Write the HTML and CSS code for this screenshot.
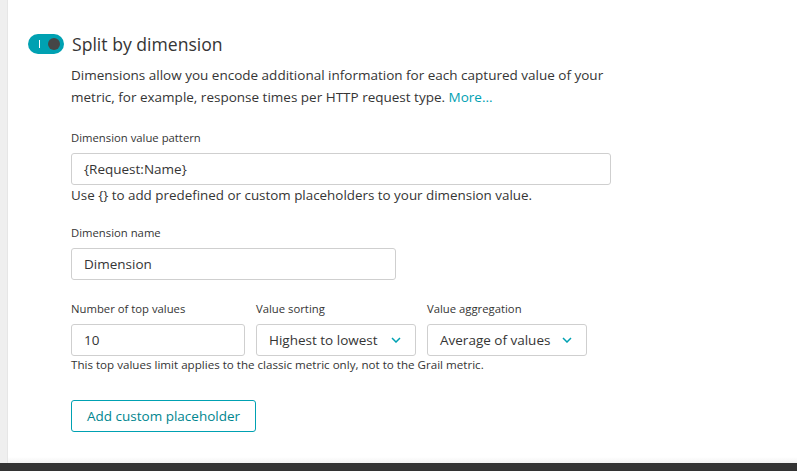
FILE: index.html
```html
<!DOCTYPE html>
<html lang="en">
<head>
    <meta charset="UTF-8">
    <title>Split by dimension</title>
    <link rel="stylesheet" href="styles.css">
</head>
<body>
    <div class="page">
        <div class="rail"></div>
        <div class="panel">
            <div class="header">
                <span class="toggle"><span class="toggle-mark"></span><span class="toggle-knob"></span></span>
                <h2 class="title">Split by dimension</h2>
            </div>
            <div class="body">
                <p class="intro">Dimensions allow you encode additional information for each captured value of your metric, for example, response times per HTTP request type. <a href="#" class="link">More...</a></p>

                <label class="label">Dimension value pattern</label>
                <div class="field wide">{Request:Name}</div>
                <p class="hint">Use {} to add predefined or custom placeholders to your dimension value.</p>

                <label class="label label-gap">Dimension name</label>
                <div class="field medium">Dimension</div>

                <div class="row">
                    <div class="col">
                        <label class="label">Number of top values</label>
                        <div class="field num">10</div>
                    </div>
                    <div class="col">
                        <label class="label">Value sorting</label>
                        <div class="field select sort">Highest to lowest
                            <svg class="chev" width="10" height="6" viewBox="0 0 10 6"><path d="M1 1l4 4 4-4" fill="none" stroke="#00a1b2" stroke-width="1.5"/></svg>
                        </div>
                    </div>
                    <div class="col">
                        <label class="label">Value aggregation</label>
                        <div class="field select agg">Average of values
                            <svg class="chev" width="10" height="6" viewBox="0 0 10 6"><path d="M1 1l4 4 4-4" fill="none" stroke="#00a1b2" stroke-width="1.5"/></svg>
                        </div>
                    </div>
                </div>
                <p class="hint small">This top values limit applies to the classic metric only, not to the Grail metric.</p>

                <button class="btn">Add custom placeholder</button>
            </div>
        </div>
    </div>
    <div class="footer"></div>
</body>
</html>
```

FILE: styles.css
```css
body {
    margin: 0;
    font-family: "Open Sans", Lato, sans-serif;
    color: #353535;
    background-color: #fff;
    height: 471px;
    display: flex;
    flex-direction: column;
    overflow: hidden;
}

.page {
    flex: 1;
    display: flex;
}

.rail {
    width: 7px;
    background-color: #efefef;
    border-right: 1px solid #e6e6e6;
}

.panel {
    flex: 1;
    padding: 33px 0 0 19px;
    background: linear-gradient(to bottom, #fff 0, #fff calc(100% - 6px), #f2f2f2 100%);
}

.header {
    display: flex;
    align-items: center;
    gap: 8px;
}

.toggle {
    position: relative;
    width: 36px;
    height: 20px;
    border-radius: 10px;
    background-color: #00a1b2;
    margin-left: 1px;
}

.toggle-mark {
    position: absolute;
    left: 11px;
    top: 6px;
    width: 1px;
    height: 8px;
    background-color: #fff;
}

.toggle-knob {
    position: absolute;
    right: 4px;
    top: 4px;
    width: 12px;
    height: 12px;
    border-radius: 50%;
    background-color: #454646;
}

.title {
    margin: 0;
    font-size: 17.6px;
    font-weight: normal;
    line-height: 22px;
}

.body {
    padding-left: 44px;
}

.intro {
    margin: 9px 0 0;
    width: 560px;
    font-size: 13.5px;
    line-height: 22px;
}

.link {
    color: #00a1b2;
    text-decoration: none;
}

.label {
    display: block;
    font-size: 11.3px;
    line-height: 16px;
    margin-top: 22px;
    margin-bottom: 7px;
}

.label-gap {
    margin-top: 21px;
}

.field {
    box-sizing: border-box;
    height: 32px;
    border: 1px solid #cfcfcf;
    border-radius: 3px;
    padding: 0 12px;
    font-size: 13.5px;
    line-height: 30px;
    display: flex;
    align-items: center;
}

.wide {
    width: 540px;
}

.medium {
    width: 325px;
}

.num {
    width: 174px;
}

.sort {
    width: 160px;
}

.agg {
    width: 160px;
}

.select {
    justify-content: space-between;
}

.chev {
    margin-right: 2px;
}

.hint {
    margin: 1px 0 0;
    font-size: 13.4px;
    line-height: 18px;
}

.hint.small {
    font-size: 11.6px;
    margin-top: 0;
}

.row {
    display: flex;
    gap: 11px;
}

.row .label {
    margin-top: 21px;
}

.btn {
    margin-top: 26px;
    height: 32px;
    padding: 0 15px;
    border: 1px solid #00a1b2;
    border-radius: 3px;
    background: #fff;
    color: #00868f;
    font-family: inherit;
    font-size: 13.5px;
}

.footer {
    height: 8px;
    background-color: #333;
}
```
